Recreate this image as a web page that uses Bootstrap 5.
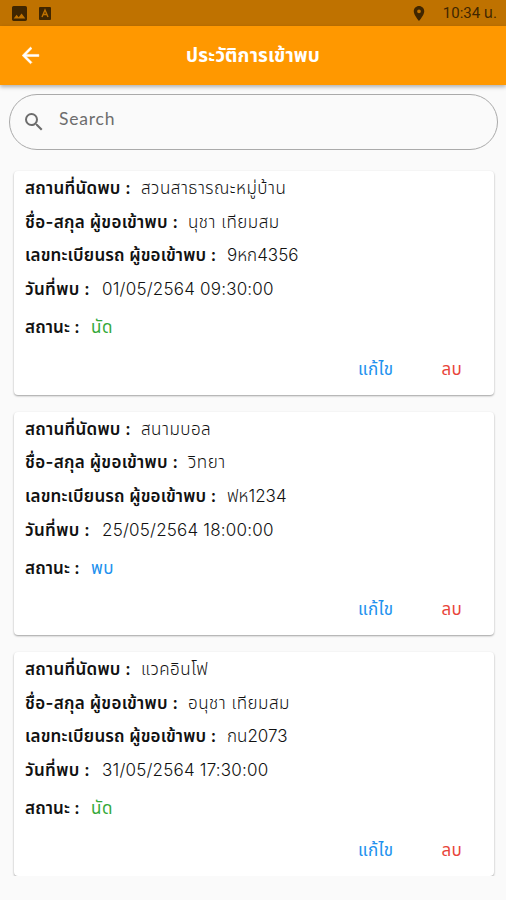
<!DOCTYPE html>
<html lang="th">
<head>
<meta charset="utf-8">
<meta name="viewport" content="width=device-width, initial-scale=1">
<title>ประวัติการเข้าพบ</title>
<link href="https://cdn.jsdelivr.net/npm/bootstrap@5.3.0/dist/css/bootstrap.min.css" rel="stylesheet">
<style>
body{font-family:Inter,"Noto Sans Thai",sans-serif;background:#fafafa;color:#111;font-size:17px;overflow:hidden}
.statusbar{height:26px;background:#bf7200;color:#402600;padding:0 9px 0 12px;font-family:Roboto,"Noto Sans Thai",sans-serif;font-size:15px}
.status-a{margin-left:12px}
.status-time{margin-left:18px}
.appbar{height:59px;background:#ff9800;box-shadow:0 2px 4px rgba(0,0,0,.3);padding-left:19px}
.appbar h1{font-size:19px;font-weight:700;left:0;right:0;line-height:62px;letter-spacing:.15px}
.searchbox{margin:9px 8px 0 9px;height:56px;border:1px solid #aaa;border-radius:28px;padding-left:12px;color:#6d6d6d}
.searchbox input{color:inherit;font-size:17.500px;letter-spacing:.8px;margin:0 0 5px 13px;font-family:Lato,sans-serif}
.searchbox input::placeholder{color:#6d6d6d;opacity:1}
.visits{padding:21px 12px 0 14px;gap:17px}
.visit{height:223.5px;border:0;border-radius:4px;box-shadow:0 1px 2px rgba(0,0,0,.36);padding:1px 0 0 11px}
.field{height:33.7px;line-height:33.7px;white-space:nowrap}
.field b{font-weight:600}
.field span{letter-spacing:.5px;font-weight:300}
.field.state span{font-weight:400}
.k1{width:116px;letter-spacing:.25px}
.k2{width:163px;letter-spacing:.3px}
.k3{width:202px;letter-spacing:.15px}
.k4{width:77px;letter-spacing:.35px}
.k5{width:66px;letter-spacing:.1px}
.field .when{letter-spacing:.2px}
.field .plate{letter-spacing:0}
.field.state{margin-top:4.500px}
.green{color:#35a93a}.blue{color:#2090ee}.red{color:#e8443a}
.acts{height:50px;padding-right:32px;gap:48px;letter-spacing:.3px}
</style>
<script src="https://cdn.jsdelivr.net/npm/bootstrap@5.3.0/dist/js/bootstrap.bundle.min.js"></script>
</head>
<body>
<div class="statusbar d-flex align-items-center">
<svg width="15" height="15" viewBox="3 3 18 18" fill="currentColor"><path d="M21 19V5c0-1.1-.9-2-2-2H5c-1.1 0-2 .9-2 2v14c0 1.1.9 2 2 2h14c1.1 0 2-.9 2-2zM8.500 13.500l2.500 3 3.500-4.500 4.500 6H5z"/></svg>
<svg class="status-a" width="12" height="13" viewBox="0 0 12 13"><rect width="12" height="13" rx="1" fill="currentColor"/><path d="M3 10 6 3 9 10M4 7.500h4" fill="none" stroke="#bf7200" stroke-width="1.400"/></svg>
<svg class="ms-auto" width="12" height="15" viewBox="5 2 14 20" fill="currentColor"><path d="M12 2C8.130 2 5 5.130 5 9c0 5.250 7 13 7 13s7-7.750 7-13c0-3.870-3.130-7-7-7zm0 9.500a2.500 2.500 0 010-5 2.500 2.500 0 010 5z"/></svg>
<span class="status-time">10:34 น.</span>
</div>
<header class="appbar d-flex align-items-center position-relative">
<svg width="23" height="24" viewBox="1 1.500 22 22" fill="#fff" stroke="#fff" stroke-width=".5"><path d="M20 11H7.830l5.590-5.590L12 4l-8 8 8 8 1.410-1.410L7.830 13H20z"/></svg>
<h1 class="position-absolute text-center text-white m-0">ประวัติการเข้าพบ</h1>
</header>
<div class="searchbox d-flex align-items-center">
<svg width="24" height="24" viewBox="0 0 24 24" fill="currentColor"><path d="M15.500 14h-.79l-.28-.27A6.470 6.470 0 0016 9.500 6.500 6.500 0 109.500 16c1.610 0 3.090-.59 4.230-1.570l.27.28v.79l5 4.990L20.490 19zm-6 0a4.500 4.500 0 110-9 4.500 4.500 0 010 9z"/></svg>
<input class="border-0 bg-transparent p-0 flex-grow-1" placeholder="Search" aria-label="Search">
</div>
<main class="visits d-flex flex-column">
<section class="visit card">
<div class="field d-flex"><b class="k1">สถานที่นัดพบ :</b><span>สวนสาธารณะหมู่บ้าน</span></div>
<div class="field d-flex"><b class="k2">ชื่อ-สกุล ผู้ขอเข้าพบ :</b><span>นุชา เทียมสม</span></div>
<div class="field d-flex"><b class="k3">เลขทะเบียนรถ ผู้ขอเข้าพบ :</b><span class="plate">9หก4356</span></div>
<div class="field d-flex"><b class="k4">วันที่พบ :</b><span class="when">01/05/2564 09:30:00</span></div>
<div class="field d-flex state"><b class="k5">สถานะ :</b><span class="green">นัด</span></div>
<div class="acts d-flex justify-content-end align-items-center"><span class="blue">แก้ไข</span><span class="red">ลบ</span></div>
</section>
<section class="visit card">
<div class="field d-flex"><b class="k1">สถานที่นัดพบ :</b><span>สนามบอล</span></div>
<div class="field d-flex"><b class="k2">ชื่อ-สกุล ผู้ขอเข้าพบ :</b><span>วิทยา</span></div>
<div class="field d-flex"><b class="k3">เลขทะเบียนรถ ผู้ขอเข้าพบ :</b><span class="plate">ฟห1234</span></div>
<div class="field d-flex"><b class="k4">วันที่พบ :</b><span class="when">25/05/2564 18:00:00</span></div>
<div class="field d-flex state"><b class="k5">สถานะ :</b><span class="blue">พบ</span></div>
<div class="acts d-flex justify-content-end align-items-center"><span class="blue">แก้ไข</span><span class="red">ลบ</span></div>
</section>
<section class="visit card">
<div class="field d-flex"><b class="k1">สถานที่นัดพบ :</b><span>แวคอินโฟ</span></div>
<div class="field d-flex"><b class="k2">ชื่อ-สกุล ผู้ขอเข้าพบ :</b><span>อนุชา เทียมสม</span></div>
<div class="field d-flex"><b class="k3">เลขทะเบียนรถ ผู้ขอเข้าพบ :</b><span class="plate">กน2073</span></div>
<div class="field d-flex"><b class="k4">วันที่พบ :</b><span class="when">31/05/2564 17:30:00</span></div>
<div class="field d-flex state"><b class="k5">สถานะ :</b><span class="green">นัด</span></div>
<div class="acts d-flex justify-content-end align-items-center"><span class="blue">แก้ไข</span><span class="red">ลบ</span></div>
</section>
</main>
</body>
</html>
